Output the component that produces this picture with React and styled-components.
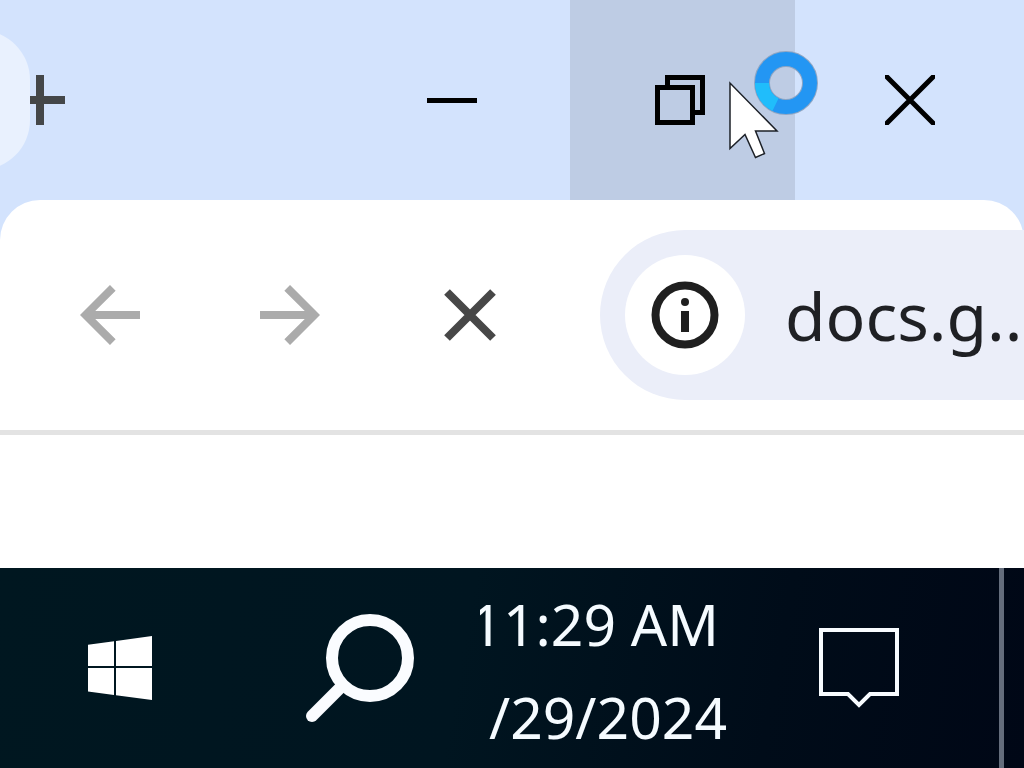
import React, { useState } from "react";
import styled, { createGlobalStyle } from "styled-components";

function App() {
  const [address, setAddress] = useState("docs.g..");

  return (
    <Screen>
      <GlobalStyle />
      <TitleBar>
        <Tab />
        <NewTabButton aria-label="New tab">
          <svg width="35" height="50" viewBox="0 0 35 50">
            <path d="M0 25H35M10 0V50" stroke="#444749" strokeWidth="8" />
          </svg>
        </NewTabButton>
        <WindowControls>
          <WindowButton $width="228px" aria-label="Minimize">
            <svg width="50" height="50" viewBox="0 0 50 50">
              <path d="M0 25.5H50" stroke="#000" strokeWidth="5" />
            </svg>
          </WindowButton>
          <WindowButton $width="225px" $hovered aria-label="Restore">
            <svg width="50" height="50" viewBox="0 0 50 50">
              <path
                d="M2.5 12.5H37.5V47.5H2.5ZM12.5 12.5V2.5H47.5V37.5H37.5"
                fill="none"
                stroke="#000"
                strokeWidth="5"
              />
            </svg>
            <BusyCursor />
          </WindowButton>
          <WindowButton $width="229px" $inset="90px" aria-label="Close">
            <svg width="50" height="50" viewBox="0 0 50 50">
              <path
                d="M1 1L49 49M49 1L1 49"
                stroke="#000"
                strokeWidth="5"
                strokeLinecap="square"
              />
            </svg>
          </WindowButton>
        </WindowControls>
      </TitleBar>

      <ToolbarBack>
        <Toolbar>
          <NavButton disabled aria-label="Back">
            <svg width="60" height="60" viewBox="0 0 60 60">
              <path
                d="M60 30H10M32.8 2.8L5.6 30L32.8 57.2"
                fill="none"
                stroke="#ababab"
                strokeWidth="8"
              />
            </svg>
          </NavButton>
          <NavButton disabled aria-label="Forward">
            <svg width="60" height="60" viewBox="0 0 60 60">
              <path
                d="M0 30H50M27.2 2.8L54.4 30L27.2 57.2"
                fill="none"
                stroke="#ababab"
                strokeWidth="8"
              />
            </svg>
          </NavButton>
          <NavButton aria-label="Stop loading">
            <svg width="52" height="52" viewBox="0 0 52 52">
              <path
                d="M3 3L49 49M49 3L3 49"
                stroke="#474747"
                strokeWidth="8"
              />
            </svg>
          </NavButton>
          <AddressBar>
            <SiteInfo aria-label="Site information">
              <svg width="68" height="68" viewBox="0 0 68 68">
                <circle
                  cx="34"
                  cy="34"
                  r="29.5"
                  fill="none"
                  stroke="#1f1f1f"
                  strokeWidth="8"
                />
                <circle cx="34" cy="21" r="4" fill="#1f1f1f" />
                <path d="M34 30V51" stroke="#1f1f1f" strokeWidth="8" />
              </svg>
            </SiteInfo>
            <AddressInput
              aria-label="Address"
              value={address}
              spellCheck={false}
              onChange={(e) => setAddress(e.target.value)}
            />
          </AddressBar>
        </Toolbar>
      </ToolbarBack>

      <Page />

      <TaskBar>
        <TaskButton aria-label="Start">
          <svg width="64" height="64" viewBox="0 0 64 64" fill="#fff">
            <path d="M0 8.8L26 5.2V30H0ZM28 4.9L64 0V30H28ZM0 32H26V59L0 55.4ZM28 32H64V64L28 59.3Z" />
          </svg>
        </TaskButton>
        <TaskButton aria-label="Search">
          <svg width="108" height="108" viewBox="0 0 108 108" fill="none">
            <circle cx="64" cy="44" r="38" stroke="#fafcff" strokeWidth="12" />
            <path
              d="M6 102L35 73"
              stroke="#fafcff"
              strokeWidth="12"
              strokeLinecap="round"
            />
          </svg>
        </TaskButton>
        <Clock>
          <Time>11:29 AM</Time>
          <Day>/29/2024</Day>
        </Clock>
        <TaskButton aria-label="Notifications">
          <svg width="80" height="80" viewBox="0 0 80 80">
            <path
              d="M2 2H78V66H51L40 77L29 66H2Z"
              fill="none"
              stroke="#f8fcff"
              strokeWidth="4"
            />
          </svg>
        </TaskButton>
        <ShowDesktop aria-label="Show desktop" />
      </TaskBar>
    </Screen>
  );
}

function BusyCursor() {
  return (
    <CursorLayer>
      <svg width="92" height="112" viewBox="0 0 92 112">
        <circle
          cx="57"
          cy="33"
          r="24"
          fill="none"
          stroke="#8fa6c4"
          strokeWidth="16"
        />
        <circle
          cx="57"
          cy="33"
          r="24"
          fill="none"
          stroke="#2396f3"
          strokeWidth="14"
        />
        <path
          d="M33 33A24 24 0 0 0 46.5 54.6"
          fill="none"
          stroke="#20bdfb"
          strokeWidth="14"
        />
        <path
          d="M1 33V98.5L16 84.5L26.5 107.5L35.5 103.5L26.5 81H48Z"
          fill="#fff"
          stroke="#1c2027"
          strokeWidth="1.5"
        />
      </svg>
    </CursorLayer>
  );
}

const GlobalStyle = createGlobalStyle`
  * {
    box-sizing: border-box;
  }

  body {
    margin: 0;
    font-family: "Noto Sans", "Open Sans", sans-serif;
  }

  button {
    border: none;
    padding: 0;
    background: none;
  }

  svg {
    display: block;
    flex-shrink: 0;
  }
`;

const Screen = styled.div`
  min-height: 100vh;
  display: flex;
  flex-direction: column;
  overflow: hidden;
  background: white;
`;

const TitleBar = styled.header`
  display: flex;
  align-items: center;
  height: 200px;
  background: #d3e3fd;
`;

const Tab = styled.div`
  width: 30px;
  height: 140px;
  overflow: hidden;

  /* only the end of the tab is on screen */
  &::before {
    content: "";
    display: block;
    width: 130px;
    height: 100%;
    margin-left: -100px;
    border-radius: 50px;
    background: #e9f1fe;
  }
`;

const NewTabButton = styled.button`
  display: flex;
  align-items: center;
  height: 140px;
`;

const WindowControls = styled.div`
  display: flex;
  height: 100%;
  margin-left: auto;
`;

const WindowButton = styled.button`
  position: relative;
  display: flex;
  align-items: center;
  width: ${(props) => props.$width};
  padding-left: ${(props) => props.$inset || "85px"};
  background: ${(props) => (props.$hovered ? "#becce4" : "transparent")};
  z-index: ${(props) => (props.$hovered ? 1 : 0)};
`;

const CursorLayer = styled.span`
  position: absolute;
  top: 50px;
  left: 159px;
  pointer-events: none;
`;

const ToolbarBack = styled.div`
  background: #d3e3fd;
`;

const Toolbar = styled.nav`
  display: flex;
  align-items: center;
  height: 235px;
  padding-left: 20px;
  border-bottom: 5px solid #e3e3e3;
  border-radius: 40px 40px 0 0;
  background: white;
`;

const NavButton = styled.button`
  display: flex;
  align-items: center;
  justify-content: center;
  width: 180px;
  height: 170px;
  flex-shrink: 0;
`;

const AddressBar = styled.div`
  display: flex;
  align-items: center;
  flex: 1;
  min-width: 0;
  height: 170px;
  margin-left: 40px;
  padding-left: 25px;
  border-radius: 85px 0 0 85px;
  background: #ebeef9;
`;

const SiteInfo = styled.button`
  display: flex;
  align-items: center;
  justify-content: center;
  width: 120px;
  height: 120px;
  flex-shrink: 0;
  border-radius: 50%;
  background: white;
`;

const AddressInput = styled.input`
  flex: 1;
  min-width: 0;
  height: 100px;
  margin-left: 40px;
  padding: 0;
  border: none;
  outline: none;
  background: transparent;
  color: #1f2024;
  font-family: inherit;
  font-size: 66px;
`;

const Page = styled.main`
  flex: 1;
  background: white;
`;

const TaskBar = styled.footer`
  display: flex;
  align-items: stretch;
  height: 200px;
  background: linear-gradient(100deg, #001720 0%, #001520 45%, #000c19 75%, #000716 100%);
`;

const TaskButton = styled.button`
  display: flex;
  align-items: center;
  justify-content: center;
  width: 240px;
`;

const Clock = styled.div`
  display: flex;
  flex-direction: column;
  align-items: flex-end;
  justify-content: center;
  width: 259px;
  padding: 6px 12px 0 0;
  overflow: hidden;
  color: #f5fbff;
  font-size: 57px;
  line-height: 93px;
  white-space: nowrap;
`;

const Time = styled.time`
  padding-right: 8px;
`;

const Day = styled.time``;

const ShowDesktop = styled.button`
  width: 25px;
  margin-left: auto;
  border-left: 5px solid #646d7c;
`;

export default App;
